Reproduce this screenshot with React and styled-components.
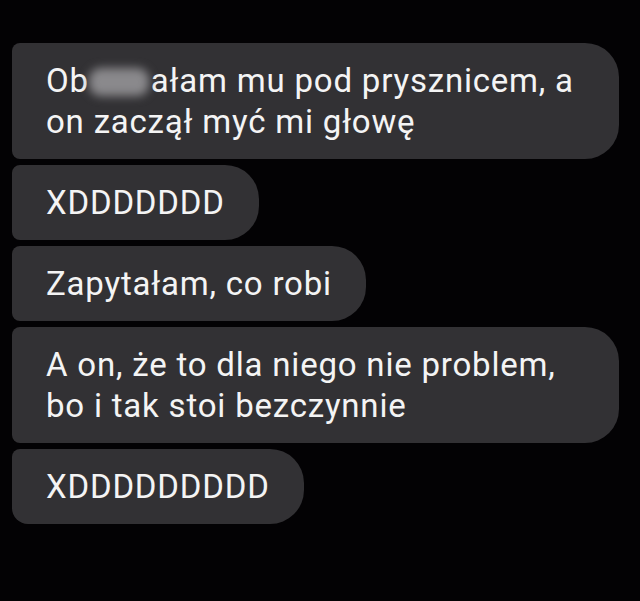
import styled, { createGlobalStyle } from "styled-components";

const GlobalStyle = createGlobalStyle`
  html, body {
    margin: 0;
    padding: 0;
    background: #030204;
  }
`;

const Screen = styled.div`
  width: 640px;
  height: 601px;
  box-sizing: border-box;
  padding: 43px 21px 0 12px;
  background: #030204;
  display: flex;
  flex-direction: column;
  align-items: flex-start;
  gap: 6px;
  font-family: Roboto, "Noto Sans", sans-serif;
`;

const Bubble = styled.div`
  box-sizing: border-box;
  align-self: ${(p) => (p.$full ? "stretch" : "flex-start")};
  padding: 17px 34px 17px 34px;
  background: #323134;
  color: #f4f4f4;
  font-size: 33px;
  letter-spacing: 0.8px;
  line-height: 41px;
  border-radius: ${(p) => (p.$last ? "8px 34px 34px 16px" : "8px 34px 34px 8px")};
  white-space: nowrap;
`;

const Censor = styled.span`
  display: inline-block;
  width: 60px;
  height: 28px;
  margin: 0 2px -4px 0;
  background: #8a898c;
  border-radius: 12px;
  filter: blur(5px);
`;

const App = () => {
  return (
    <Screen>
      <GlobalStyle />
      <Bubble $full>
        Ob<Censor />ałam mu pod prysznicem, a
        <br />
        on zaczął myć mi głowę
      </Bubble>
      <Bubble>XDDDDDDD</Bubble>
      <Bubble>Zapytałam, co robi</Bubble>
      <Bubble $full>
        A on, że to dla niego nie problem,
        <br />
        bo i tak stoi bezczynnie
      </Bubble>
      <Bubble $last>XDDDDDDDDD</Bubble>
    </Screen>
  );
};

export default App;
